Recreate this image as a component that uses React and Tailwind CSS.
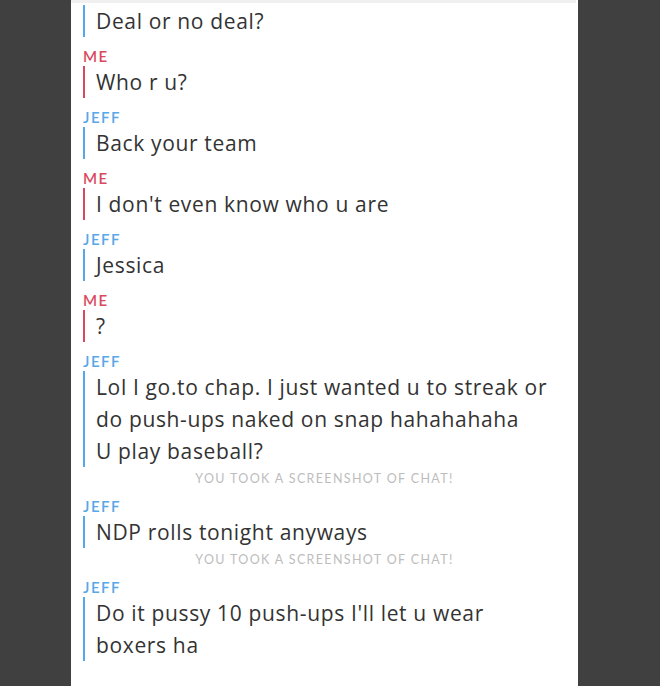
import React from "react";

const BLUE = "bg-[#56a8e6]";
const RED = "bg-[#d9495d]";

function Group({ who, lines }) {
  const isMe = who === "ME";
  return (
    <div className="mb-[11px]">
      {who && (
        <div
          className={`h-[16px] leading-[16px] text-[15px] font-semibold tracking-[1.5px] mb-[2px] ${
            isMe ? "text-[#d9495d]" : "text-[#56a8e6]"
          }`}
          style={{ fontFamily: "Lato, sans-serif" }}
        >
          {who}
        </div>
      )}
      <div className="flex">
        <div className={`w-[2px] ${isMe ? RED : BLUE}`} />
        <div className="pl-[11px] text-[21px] leading-[32px] tracking-[0.65px] text-[#333333]">
          {lines.map((l, i) => (
            <div key={i}>{l}</div>
          ))}
        </div>
      </div>
    </div>
  );
}

function Notice() {
  return (
    <div
      className="h-[24px] leading-[24px] -mt-[11px] mb-[7px] text-center text-[12.5px] tracking-[1.35px] text-[#bdbdbd] pr-[12px]"
      style={{ fontFamily: "Lato, sans-serif" }}
    >
      YOU TOOK A SCREENSHOT OF CHAT!
    </div>
  );
}

export default function App() {
  return (
    <div
      className="w-[660px] h-[686px] bg-[#404040] flex justify-start overflow-hidden"
      style={{ fontFamily: "'Open Sans', Lato, sans-serif" }}
    >
      <div className="ml-[71px] w-[507px] h-full bg-white">
        <div className="h-[3px] bg-[#f0f0f0] mr-[2px]" />
        <div className="pl-[12px] pt-[2px]">
          <Group who={null} lines={["Deal or no deal?"]} />
          <Group who="ME" lines={["Who r u?"]} />
          <Group who="JEFF" lines={["Back your team"]} />
          <Group who="ME" lines={["I don't even know who u are"]} />
          <Group who="JEFF" lines={["Jessica"]} />
          <Group who="ME" lines={["?"]} />
          <Group
            who="JEFF"
            lines={[
              "Lol I go.to chap. I just wanted u to streak or",
              "do push-ups naked on snap hahahahaha",
              "U play baseball?",
            ]}
          />
          <Notice />
          <Group who="JEFF" lines={["NDP rolls tonight anyways"]} />
          <Notice />
          <Group
            who="JEFF"
            lines={["Do it pussy 10 push-ups I'll let u wear", "boxers ha"]}
          />
        </div>
      </div>
    </div>
  );
}
